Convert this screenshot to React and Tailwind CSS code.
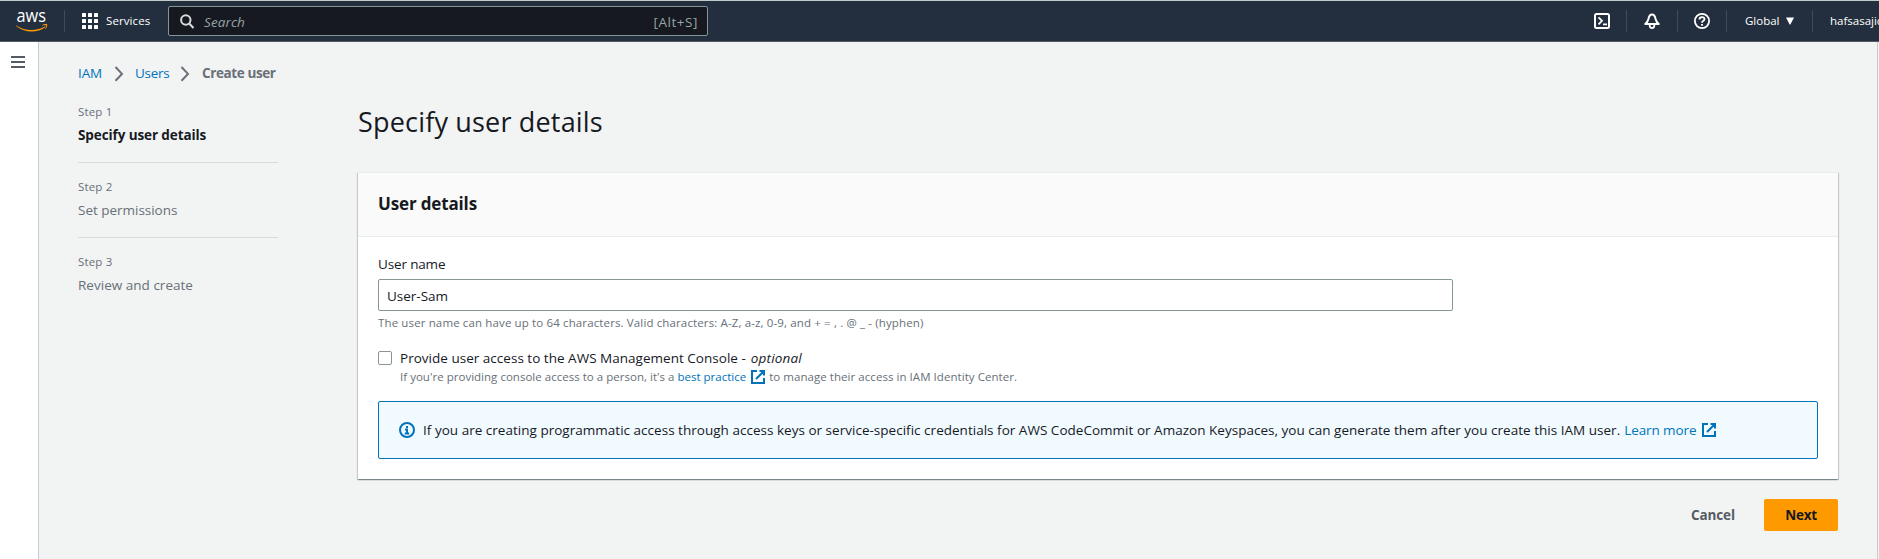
const steps = [
  { label: "Step 1", title: "Specify user details", cls: "font-bold text-[#16191f] tracking-[-0.1px]" },
  { label: "Step 2", title: "Set permissions", cls: "text-[#687078] tracking-[-0.02px]" },
  { label: "Step 3", title: "Review and create", cls: "text-[#687078] tracking-[0.02px]" },
];

function AwsLogo() {
  return (
    <svg className="ml-4 h-6 w-8 shrink-0 overflow-visible" viewBox="0 0 32 24" fill="none">
      <text x="0.5" y="13" fill="#fff" fontFamily="Open Sans, sans-serif" fontSize="17.5" textLength="29.5" lengthAdjust="spacingAndGlyphs">aws</text>
      <path d="M0.3 16.6C5 19.8 10 21 15.5 21C20.5 21 25.5 19.7 28.6 17.6C29.2 17.3 29.5 17.9 29 18.3C25.5 21.2 20.500 22.500 15.800 22.500C9.800 22.500 4 20.500 0.100 17C-0.2 16.600 0 16.300 0.300 16.600Z" fill="#f90" />
      <path d="M30.3 16.500C29.800 15.900 27.500 16.200 26.300 16.400C26 16.400 25.900 16.100 26.200 15.900C28 14.700 30.800 15 31.200 15.400C31.500 15.900 31 18.700 29.400 20.100C29.200 20.300 28.900 20.200 29 19.900C29.400 19 30.700 17 30.300 16.500Z" fill="#f90" />
    </svg>
  );
}

function External({ className }) {
  return (
    <svg className={"h-4 w-4 shrink-0 " + className} viewBox="0 0 16 16" fill="none" stroke="#0073bb" strokeWidth="2">
      <path d="M9.500 2H14V6.500M6 10L14 2M14 9V14H2V2H7" />
    </svg>
  );
}

function Chevron() {
  return (
    <svg className="h-4 w-[10px] shrink-0" viewBox="0 0 10 16" fill="none" stroke="#687078" strokeWidth="2">
      <path d="M1.500 1L8 7.900L1.500 14.800" />
    </svg>
  );
}

function Divider({ className }) {
  return <div className={"h-[22px] w-px shrink-0 bg-[#424a55] " + className} />;
}

function Header() {
  return (
    <header className="flex h-[42px] items-center overflow-hidden border-t border-b border-t-[#c3cccb] border-b-[#545b64] bg-[#232f3e] text-white">
      <AwsLogo />
      <Divider className="ml-4" />
      <svg className="ml-[17px] h-4 w-4 shrink-0" viewBox="0 0 16 16" fill="#fff">
        {[0, 6, 12].map((y) => [0, 6, 12].map((x) => <rect key={x + "-" + y} x={x} y={y} width="4" height="4" rx="0.500" />))}
      </svg>
      <span className="ml-2 w-[62px] shrink-0 text-[11.5px] font-medium tracking-[0.1px]">Services</span>
      <div className="flex h-[30px] w-[540px] shrink-0 items-center rounded-[2px] border border-[#879596] bg-[#16191f] text-[13.5px] text-[#95a5a6]">
        <svg className="ml-[11px] h-[15px] w-[15px]" viewBox="0 0 15 15" fill="none" stroke="#d5dbdb" strokeWidth="2">
          <circle cx="5.800" cy="6" r="4.700" />
          <path d="M9.200 9.500L13.500 14" />
        </svg>
        <span className="ml-[9px] mt-0.5 italic tracking-[0.1px]">Search</span>
        <span className="mr-[9px] ml-auto mt-0.5 tracking-[0.54px]">[Alt+S]</span>
      </div>
      <svg className="ml-[886px] h-4 w-4 shrink-0" viewBox="0 0 16 16" fill="none" stroke="#fff" strokeWidth="2">
        <rect x="1" y="1" width="14" height="14" rx="1.500" />
        <path d="M4.500 4.300L8 7.800L4.500 11.300M9 11.300H13" strokeWidth="1.800" />
      </svg>
      <Divider className="ml-4" />
      <svg className="ml-[17px] h-4 w-4 shrink-0" viewBox="0 0 16 16" fill="none" stroke="#fff" strokeWidth="2" strokeLinejoin="round">
        <path d="M1.200 11H14.800C12.600 9.700 12.200 8.500 11.600 6C11.100 3.500 10 1.600 8 1.600C6 1.600 4.900 3.500 4.400 6C3.800 8.500 3.400 9.700 1.200 11Z" />
        <path d="M5.700 11.500V12.500C5.700 14 6.800 15 8 15C9.200 15 10.300 14 10.300 12.500V11.500" strokeWidth="1.800" />
      </svg>
      <Divider className="ml-[17px]" />
      <svg className="ml-4 h-4 w-4 shrink-0" viewBox="0 0 16 16" fill="none" stroke="#fff" strokeWidth="1.800">
        <circle cx="8" cy="8" r="7.100" />
        <path d="M5.500 6.500C5.500 5 6.500 4.100 8 4.100C9.500 4.100 10.500 5 10.500 6.200C10.500 7.800 8 7.700 8 9.700M8 10.900V12.700" />
      </svg>
      <Divider className="ml-4" />
      <span className="ml-[18px] w-[36px] shrink-0 text-[11.5px] font-medium">Global</span>
      <svg className="ml-[5px] h-2 w-2 shrink-0" viewBox="0 0 8 8" fill="#fff">
        <path d="M0 0.500H8L4.500 7.300Q4 8 3.500 7.300Z" />
      </svg>
      <Divider className="ml-[18px]" />
      <span className="ml-[17px] shrink-0 text-[11.5px] font-medium">hafsasajid</span>
    </header>
  );
}

function UserDetailsCard() {
  return (
    <section className="mt-8 border-t border-[#eaeded] bg-white shadow-[0_1px_1px_0_rgba(0,28,36,0.3),1px_1px_1px_0_rgba(0,28,36,0.15),-1px_1px_1px_0_rgba(0,28,36,0.15)]">
      <div className="flex h-16 items-center border-b border-[#eaeded] bg-[#fafafa] px-5 pb-px">
        <h2 className="text-[17px] font-bold tracking-[-0.15px]">User details</h2>
      </div>
      <div className="px-5 pt-[17px] pb-5">
        <label className="block h-[21px] text-[13.5px] leading-[21px] tracking-[-0.15px]">User name</label>
        <div className="mt-1 flex h-8 w-[1075px] items-center rounded-[2px] border border-[#879596] px-2 pt-[3px] text-[13.5px]">User-Sam</div>
        <p className="mt-1 text-[11.5px] leading-4 tracking-[0.13px] text-[#687078]">The user name can have up to 64 characters. Valid characters: A-Z, a-z, 0-9, and + = , . @ _ - (hyphen)</p>
        <div className="mt-[18px] flex">
          <div className="mt-0.5 h-[14px] w-[14px] rounded-[2px] border border-[#879596]" />
          <div className="ml-2">
            <div className="flex h-5 gap-[5px] text-[13.5px] leading-[19px]">
              <span className="tracking-[0.02px]">Provide user access to the AWS Management Console -</span>
              <span className="italic tracking-[0.16px]">optional</span>
            </div>
            <div className="flex h-4 items-center text-[11.5px] leading-4 text-[#687078]">
              <span className="tracking-[0.02px]">If you're providing console access to a person, it's a</span>
              <a className="ml-[3px] text-[#0073bb]">best practice</a>
              <External className="ml-1" />
              <span className="ml-[3px] tracking-[0.05px]">to manage their access in IAM Identity Center.</span>
            </div>
          </div>
        </div>
        <div className="mt-4 flex h-[58px] items-center rounded-[2px] border border-[#0073bb] bg-[#f1faff] px-5 text-[13.5px]">
          <svg className="h-4 w-4 shrink-0" viewBox="0 0 16 16" fill="none" stroke="#0073bb" strokeWidth="2">
            <circle cx="8" cy="8" r="7" />
            <path d="M8 11.500V7.500H6M10.200 11.500H5.800M8 6V4" />
          </svg>
          <span className="ml-2 tracking-[0.02px]">If you are creating programmatic access through access keys or service-specific credentials for AWS CodeCommit or Amazon Keyspaces, you can generate them after you create this IAM user.</span>
          <a className="ml-1 tracking-[-0.1px] text-[#0073bb]">Learn more</a>
          <External className="ml-[5px]" />
        </div>
      </div>
    </section>
  );
}

export default function App() {
  return (
    <div className="flex h-[559px] flex-col overflow-hidden bg-[#f2f3f3] font-['Open_Sans','Noto_Sans',sans-serif] text-[#16191f]">
      <Header />
      <div className="flex flex-1">
        <aside className="w-[39px] shrink-0 border-r border-[#c6cbcb] bg-white pt-[14px] pl-[11px]">
          <div className="flex w-[14px] flex-col gap-[3px]">
            <div className="h-0.5 bg-[#545b64]" />
            <div className="h-0.5 bg-[#545b64]" />
            <div className="h-0.5 bg-[#545b64]" />
          </div>
        </aside>
        <main className="mr-px w-[1839px] border-r border-[#c6cbcb] pt-[21px] pr-[39px] pl-[39px]">
          <nav className="flex h-[21px] items-center text-[13.5px]">
            <a className="w-9 pb-px tracking-[-0.1px] text-[#0073bb]">IAM</a>
            <Chevron />
            <a className="ml-[11px] w-[45px] pb-px tracking-[-0.3px] text-[#0073bb]">Users</a>
            <Chevron />
            <span className="ml-3 pb-px font-bold tracking-[-0.4px] text-[#687078]">Create user</span>
          </nav>
          <div className="mt-5 flex gap-20">
            <ol className="w-[200px] shrink-0">
              {steps.map((s, i) => (
                <li key={s.label} className={i < 2 ? "mb-4 border-b border-[#d5dbdb] pb-4" : ""}>
                  <div className="text-[11.5px] leading-4 tracking-[0.17px] text-[#687078]">{s.label}</div>
                  <div className={"mt-[5px] h-[21px] text-[13.5px] leading-5 " + s.cls}>{s.title}</div>
                </li>
              ))}
            </ol>
            <div className="w-[1480px] shrink-0">
              <h1 className="h-9 text-[27px] leading-9 tracking-[0.18px]">Specify user details</h1>
              <UserDetailsCard />
              <div className="mt-5 flex h-8 items-center justify-end text-[13.5px] font-bold">
                <button className="mr-[29px] tracking-[-0.1px] text-[#545b64]">Cancel</button>
                <button className="h-8 w-[74px] rounded-[2px] bg-[#ff9900] tracking-[-0.3px]">Next</button>
              </div>
            </div>
          </div>
        </main>
      </div>
    </div>
  );
}
